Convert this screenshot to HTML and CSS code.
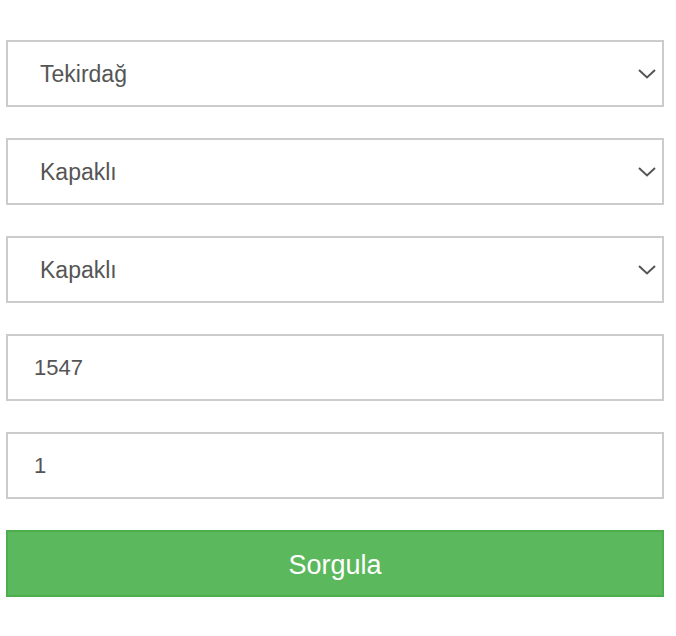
FILE: index.html
```html
<!DOCTYPE html>
<html lang="tr">
<head>
<meta charset="utf-8">
<title>Sorgula</title>
<link rel="stylesheet" href="styles.css">
</head>
<body>
<form class="form">
  <div class="select-wrap">
    <select class="field field-select"><option>Tekirdağ</option></select>
    <svg class="chevron" width="18" height="10" viewBox="0 0 18 10"><path d="M1 1 L9 8.5 L17 1" fill="none" stroke="#555" stroke-width="2"/></svg>
  </div>
  <div class="select-wrap">
    <select class="field field-select"><option>Kapaklı</option></select>
    <svg class="chevron" width="18" height="10" viewBox="0 0 18 10"><path d="M1 1 L9 8.5 L17 1" fill="none" stroke="#555" stroke-width="2"/></svg>
  </div>
  <div class="select-wrap">
    <select class="field field-select"><option>Kapaklı</option></select>
    <svg class="chevron" width="18" height="10" viewBox="0 0 18 10"><path d="M1 1 L9 8.5 L17 1" fill="none" stroke="#555" stroke-width="2"/></svg>
  </div>
  <input class="field field-input" type="text" value="1547">
  <input class="field field-input" type="text" value="1">
  <button class="btn" type="button">Sorgula</button>
</form>
</body>
</html>
```
FILE: styles.css
```css
html, body {
  margin: 0;
  padding: 0;
  background: #fff;
}
.form {
  display: flex;
  flex-direction: column;
  gap: 31px;
  width: 658px;
  padding: 40px 0 0 6px;
  font-family: "Liberation Sans", Arial, Helvetica, sans-serif;
}
.select-wrap {
  position: relative;
  height: 67px;
}
.field {
  box-sizing: border-box;
  display: block;
  width: 658px;
  height: 67px;
  margin: 0;
  border: 2px solid #cccccc;
  border-radius: 0;
  background: #fff;
  color: #555555;
  font-family: "Liberation Sans", Arial, Helvetica, sans-serif;
  font-size: 22px;
  outline: none;
}
.field-select {
  -webkit-appearance: none;
  appearance: none;
  font-size: 23px;
  padding: 0 0 0 32px;
}
.field-input {
  padding: 0 0 0 26px;
}
.chevron {
  position: absolute;
  right: 8px;
  top: 29px;
  pointer-events: none;
}
.btn {
  box-sizing: border-box;
  width: 658px;
  height: 67px;
  margin: 0;
  border: 2px solid #4cae4c;
  border-radius: 0;
  background: #5cb85c;
  color: #fff;
  font-family: "Liberation Sans", Arial, Helvetica, sans-serif;
  font-size: 27px;
  padding: 4px 0 0 0;
}
```
